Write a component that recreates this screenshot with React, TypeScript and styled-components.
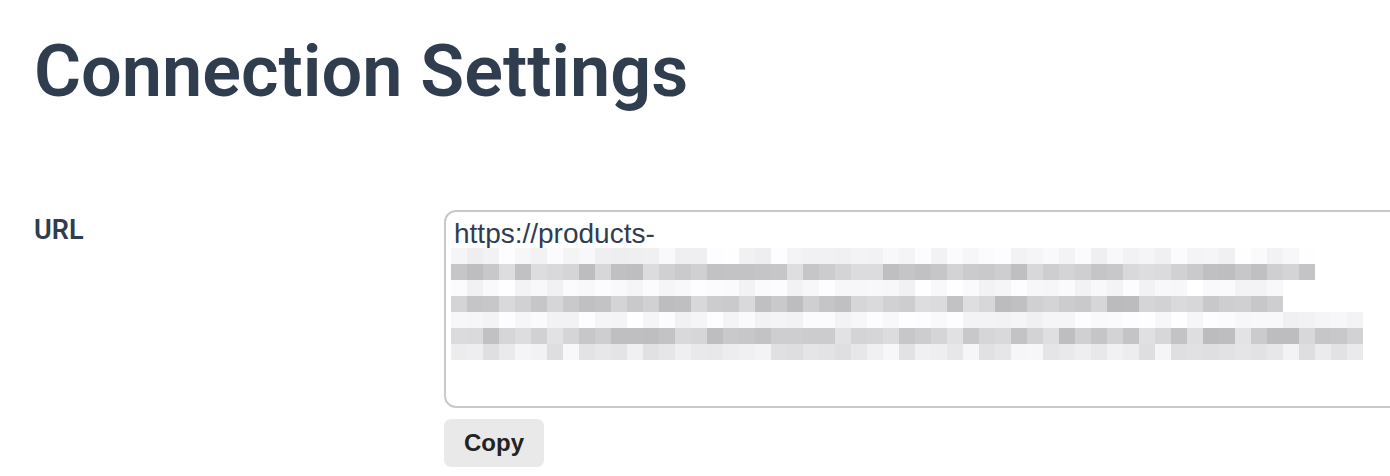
import React from "react";
import styled, { createGlobalStyle } from "styled-components";

const Global = createGlobalStyle`
  html, body { margin: 0; padding: 0; background: #ffffff; overflow: hidden; }
  body { font-family: Roboto, "Liberation Sans", Arial, sans-serif; }
`;

const Page = styled.div`
  padding: 29px 0 0 34px;
  width: 1390px;
  height: 476px;
  box-sizing: border-box;
  overflow: hidden;
`;

const Title = styled.h1`
  margin: 0;
  font-family: Roboto, "Liberation Sans", Arial, sans-serif;
  font-weight: 600;
  font-size: 72px;
  line-height: normal;
  color: #2f3d4f;
  letter-spacing: 0;
`;

const FormRow = styled.div`
  display: grid;
  grid-template-columns: 410px 1000px;
  margin-top: 96px;
`;

const Label = styled.label`
  padding-top: 4px;
  font-family: Roboto, "Liberation Sans", Arial, sans-serif;
  font-weight: 600;
  font-size: 27px;
  line-height: normal;
  color: #2f3d4f;
`;

const FieldColumn = styled.div`
  display: flex;
  flex-direction: column;
  align-items: flex-start;
  gap: 11px;
`;

const UrlBox = styled.div`
  width: 1000px;
  height: 198px;
  box-sizing: border-box;
  border: 2px solid #c9c9c9;
  border-radius: 12px;
  padding: 4px 8px;
  font-family: "Liberation Sans", Arial, sans-serif;
  font-size: 28px;
  line-height: 35px;
  color: #2f3d4f;
  overflow: hidden;
`;

const UrlText = styled.div`
  white-space: nowrap;
`;

const Redacted = styled.svg`
  display: block;
  margin: -3px 0 0 -3px;
`;

const CopyButton = styled.button`
  width: 100px;
  height: 48px;
  border: none;
  border-radius: 7px;
  background: #e9e9e9;
  font-family: "Liberation Sans", Arial, sans-serif;
  font-weight: 700;
  font-size: 24px;
  color: #232323;
  padding: 0;
  cursor: pointer;
`;

const CELL = 16;

function rand(seed: number) {
  const x = Math.sin(seed * 12.9898 + 78.233) * 43758.5453;
  return x - Math.floor(x);
}

const rows: { count: number; min: number; max: number }[] = [
  { count: 54, min: 238, max: 254 },
  { count: 54, min: 188, max: 222 },
  { count: 52, min: 240, max: 255 },
  { count: 52, min: 186, max: 222 },
  { count: 57, min: 240, max: 254 },
  { count: 57, min: 188, max: 228 },
  { count: 57, min: 222, max: 250 },
];

function Mosaic() {
  const rects: React.ReactNode[] = [];
  rows.forEach((r, ri) => {
    for (let i = 0; i < r.count; i++) {
      const t = rand(ri * 131 + i * 7 + 3);
      const v = Math.round(r.min + (r.max - r.min) * t);
      const b = Math.min(255, v + 3);
      rects.push(
        <rect
          key={`${ri}-${i}`}
          x={i * CELL}
          y={ri * CELL}
          width={CELL}
          height={CELL}
          fill={`rgb(${v},${v},${b})`}
        />
      );
    }
  });
  return (
    <Redacted width={57 * CELL} height={rows.length * CELL} shapeRendering="crispEdges">
      {rects}
    </Redacted>
  );
}

export default function App() {
  return (
    <>
      <Global />
      <Page>
        <Title>Connection Settings</Title>
        <FormRow>
          <Label>URL</Label>
          <FieldColumn>
            <UrlBox>
              <UrlText>https://products-</UrlText>
              <Mosaic />
            </UrlBox>
            <CopyButton>Copy</CopyButton>
          </FieldColumn>
        </FormRow>
      </Page>
    </>
  );
}
